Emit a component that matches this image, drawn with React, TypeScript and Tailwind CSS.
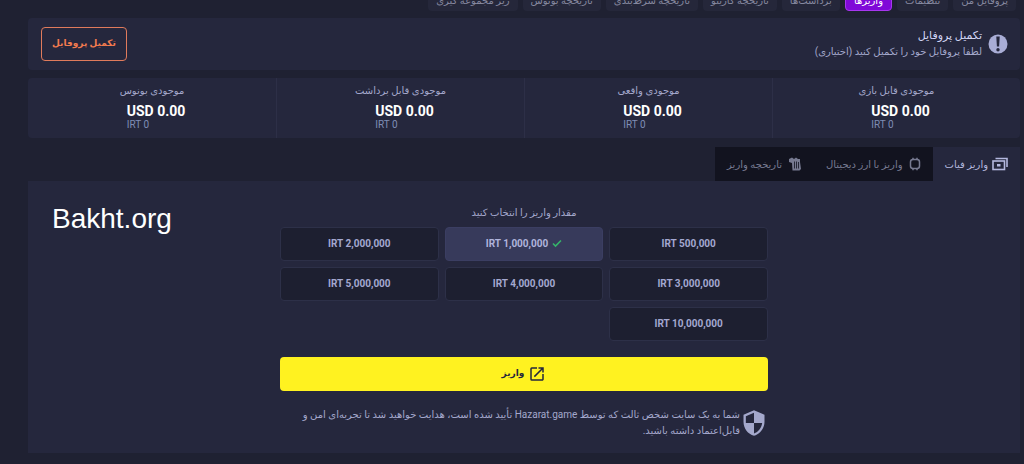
import type { ReactNode } from "react";
import { MdOpenInNew, MdSecurity } from "react-icons/md";

type Balance = {
  title: string;
  usd: string;
  irt: string;
};

const sections = [
  "پروفایل من",
  "تنظیمات",
  "واریزها",
  "برداشت‌ها",
  "تاریخچه کازینو",
  "تاریخچه شرط‌بندی",
  "تاریخچه بونوس",
  "زیر مجموعه گیری",
];

const balances: Balance[] = [
  { title: "موجودی قابل بازی", usd: "USD 0.00", irt: "IRT 0" },
  { title: "موجودی واقعی", usd: "USD 0.00", irt: "IRT 0" },
  { title: "موجودی قابل برداشت", usd: "USD 0.00", irt: "IRT 0" },
  { title: "موجودی بونوس", usd: "USD 0.00", irt: "IRT 0" },
];

const amounts = [
  "500,000",
  "1,000,000",
  "2,000,000",
  "3,000,000",
  "4,000,000",
  "5,000,000",
  "10,000,000",
];

function AlertIcon() {
  return (
    <svg viewBox="0 0 20 20" className="h-5 w-5 shrink-0" aria-hidden="true">
      <circle cx="10" cy="10" r="9.5" fill="#a9add6" />
      <path d="M8.300 2.500h3.400l-.6 10H8.900z" fill="#25273d" />
      <circle cx="10" cy="15.700" r="1.700" fill="#25273d" />
    </svg>
  );
}

function CheckIcon() {
  return (
    <svg viewBox="0 0 10 10" className="h-2.5 w-2.5" fill="none" stroke="#35b56a" strokeWidth="1.6" aria-hidden="true">
      <path d="M1 5.500 3.500 8 9 2.500" />
    </svg>
  );
}

function CashIcon() {
  return (
    <svg viewBox="0 0 16 14" className="h-[14px] w-4" fill="none" stroke="currentColor" strokeWidth="1.6" aria-hidden="true">
      <path d="M3.500 1.500H15V10" />
      <rect x="1" y="4" width="11.500" height="8.500" />
      <rect x="5" y="7" width="3.500" height="2.500" fill="currentColor" stroke="none" />
    </svg>
  );
}

function CoinIcon() {
  return (
    <svg viewBox="0 0 12 14" className="h-[14px] w-3" fill="none" stroke="currentColor" strokeWidth="1.5" aria-hidden="true">
      <rect x="1.5" y="2.5" width="9" height="9" rx="2.5" />
      <path d="M4 .8v1.7M8 .8v1.7M4 11.5v1.7M8 11.5v1.7" />
    </svg>
  );
}

function HistoryIcon() {
  return (
    <svg viewBox="0 0 14 14" className="h-[14px] w-[14px]" fill="currentColor" aria-hidden="true">
      <path d="M1 2 4 .5 6 2l2-1.500L10 2h2v3l1 7-1.500 1.500H4.500L4 6 1 5z" />
      <path d="M6.500 4.500v7M8.500 4.500v7M10.500 5v6.500" stroke="#12131f" strokeWidth=".8" />
    </svg>
  );
}

type TabProps = {
  icon: ReactNode;
  label: string;
  active?: boolean;
};

function DepositTab({ icon, label, active }: TabProps) {
  return (
    <button
      role="tab"
      aria-selected={!!active}
      className={
        active
          ? "flex h-[34px] items-center gap-1 bg-[#25273d] px-3 text-[#b4b8df]"
          : "flex h-[34px] items-center gap-1.5 bg-[#12131f] px-3 text-[#777a91]"
      }
    >
      {icon}
      <span>{label}</span>
    </button>
  );
}

export default function App() {
  return (
    <div
      dir="rtl"
      className="min-h-screen bg-[#1f2132] pr-1 pl-7 font-['Roboto','DejaVu_Sans',sans-serif] text-[10px] text-[#a4a8cc]"
    >
      {/* Section links */}
      <nav className="flex h-[11px] items-end gap-[5px] overflow-hidden pr-1">
        {sections.map((name) => (
          <a
            key={name}
            href="#"
            className={
              name === "واریزها"
                ? "shrink-0 rounded-sm border border-[#a737ef] bg-[#8009d8] px-2 pt-2 pb-px leading-4 text-white"
                : "shrink-0 rounded-sm bg-[#25273a] px-2 pt-2 pb-0.5 leading-4 text-[#85889f]"
            }
          >
            {name}
          </a>
        ))}
      </nav>

      {/* Profile notice */}
      <section className="mt-[7px] flex h-[52px] items-center justify-between rounded-sm bg-[#25273d] pr-3 pl-[13px]">
        <div className="flex items-center gap-1.5">
          <AlertIcon />
          <div>
            <h2 className="text-[11px] leading-4 font-medium text-[#d3d6f5]">تکمیل پروفایل</h2>
            <p className="leading-4">لطفا پروفایل خود را تکمیل کنید (اختیاری)</p>
          </div>
        </div>
        <button className="h-[34px] rounded border border-[#e07b5c] px-2.5 text-[9px] font-bold text-[#f27b4f]">
          تکمیل پروفایل
        </button>
      </section>

      {/* Balances */}
      <section className="mt-2 grid grid-cols-4 divide-x divide-[#2d2f47] rounded-sm bg-[#25273d]">
        {balances.map((item) => (
          <div key={item.title} className="flex h-[60px] flex-col items-center pt-[5px]">
            <h3 className="leading-4">{item.title}</h3>
            <div dir="ltr" className="pl-2">
              <p className="text-[14px] leading-6 font-bold text-white">{item.usd}</p>
              <p className="-mt-1 leading-3 text-[#7f8db5]">{item.irt}</p>
            </div>
          </div>
        ))}
      </section>

      {/* Deposit tabs */}
      <div role="tablist" className="mt-[9px] flex">
        <DepositTab active icon={<CashIcon />} label="واریز فیات" />
        <DepositTab icon={<CoinIcon />} label="واریز با ارز دیجیتال" />
        <DepositTab icon={<HistoryIcon />} label="تاریخچه واریز" />
      </div>

      <main className="relative bg-[#25273d] pt-6 pb-3.5">
        <p dir="ltr" className="absolute top-5 left-6 font-['Liberation_Sans',sans-serif] text-[28px] leading-9 text-white">
          Bakht.org
        </p>

        <div className="mx-auto max-w-[488px]">
          <p className="text-center leading-4">مقدار واریز را انتخاب کنید</p>
          <div className="mt-1.5 grid grid-cols-3 gap-1.5">
            {amounts.map((amount) => {
              const selected = amount === "1,000,000";
              return (
                <button
                  key={amount}
                  dir="ltr"
                  aria-pressed={selected}
                  className={
                    selected
                      ? "flex h-[34px] items-center justify-center gap-1 rounded border border-[#3b3e62] bg-[#373a5b] pb-0.5 font-bold text-[#b0b4dc]"
                      : "flex h-[34px] items-center justify-center gap-1 rounded border border-[#2d3048] bg-[#1d1f30] pb-0.5 font-bold text-[#a4a8d0]"
                  }
                >
                  IRT {amount}
                  {selected && <CheckIcon />}
                </button>
              );
            })}
          </div>

          <button className="mt-4 flex h-[34px] w-full items-center justify-center gap-1 rounded bg-[#fff220] text-[9px] font-bold text-[#25273d]">
            <MdOpenInNew className="h-[18px] w-[18px]" />
            واریز
          </button>

          <div className="mt-4 flex items-center">
            <MdSecurity className="h-7 w-7 shrink-0" />
            <p className="leading-4">
              شما به یک سایت شخص ثالث که توسط Hazarat.game تأیید شده است، هدایت خواهید شد تا تجربه‌ای امن و
              قابل‌اعتماد داشته باشید.
            </p>
          </div>
        </div>
      </main>
    </div>
  );
}
